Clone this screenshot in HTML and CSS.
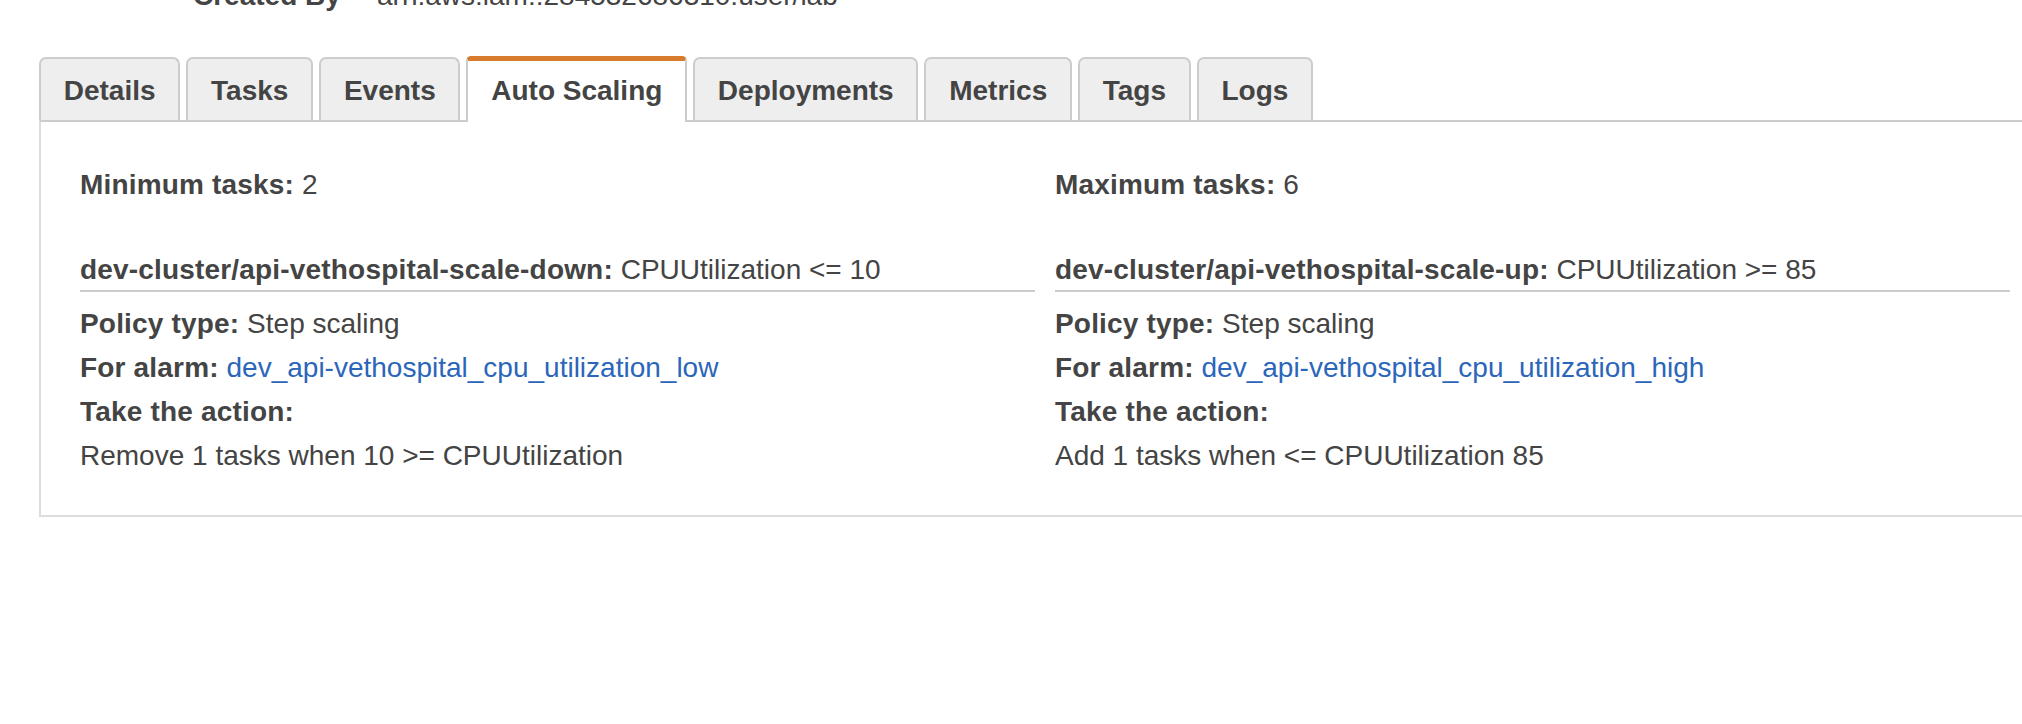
FILE: index.html
```html
<!DOCTYPE html>
<html>
<head>
<meta charset="utf-8">
<link rel="stylesheet" href="styles.css">
</head>
<body>
<div class="page">
  <div class="meta">
    <span class="meta-label">Created By</span>
    <span class="meta-value">arn:aws:iam::284532686310:user/lab</span>
  </div>
  <div class="tabs">
    <div class="tab">Details</div>
    <div class="tab">Tasks</div>
    <div class="tab">Events</div>
    <div class="tab active">Auto Scaling</div>
    <div class="tab">Deployments</div>
    <div class="tab">Metrics</div>
    <div class="tab">Tags</div>
    <div class="tab">Logs</div>
  </div>
  <div class="panel">
    <div class="col">
      <div class="limit"><b>Minimum tasks:</b> 2</div>
      <div class="policy-head"><b>dev-cluster/api-vethospital-scale-down:</b> CPUUtilization &lt;= 10</div>
      <div class="row"><b>Policy type:</b> Step scaling</div>
      <div class="row"><b>For alarm:</b> <a class="link" href="#">dev_api-vethospital_cpu_utilization_low</a></div>
      <div class="row"><b>Take the action:</b></div>
      <div class="row">Remove 1 tasks when 10 &gt;= CPUUtilization</div>
    </div>
    <div class="col">
      <div class="limit"><b>Maximum tasks:</b> 6</div>
      <div class="policy-head"><b>dev-cluster/api-vethospital-scale-up:</b> CPUUtilization &gt;= 85</div>
      <div class="row"><b>Policy type:</b> Step scaling</div>
      <div class="row"><b>For alarm:</b> <a class="link" href="#">dev_api-vethospital_cpu_utilization_high</a></div>
      <div class="row"><b>Take the action:</b></div>
      <div class="row">Add 1 tasks when &lt;= CPUUtilization 85</div>
    </div>
  </div>
</div>
</body>
</html>
```

FILE: styles.css
```css
html, body {
  margin: 0;
  padding: 0;
  background: #fff;
  overflow: hidden;
}
body {
  font-family: "Liberation Sans", Arial, sans-serif;
  font-size: 28px;
  color: #444;
}
b {
  letter-spacing: 0.18px;
}
.page {
  width: 2100px;
}
.meta {
  display: flex;
  height: 18px;
  line-height: 44px;
  margin-top: -26px;
  padding-left: 193px;
  margin-bottom: 64px;
}
.meta-label {
  font-weight: bold;
  width: 184px;
}
.tabs {
  display: flex;
  align-items: flex-end;
  gap: 6px;
  padding-left: 39px;
}
.tab {
  box-sizing: border-box;
  height: 63px;
  padding: 2px 22.75px 0;
  line-height: 59px;
  font-weight: bold;
  background: #eee;
  border: 2px solid #ccc;
  border-bottom: 0;
  border-radius: 7px 7px 0 0;
  white-space: nowrap;
}
.tab.active {
  position: relative;
  z-index: 1;
  height: 66px;
  margin-bottom: -2px;
  padding-top: 0;
  background: #fff;
  border-top: 5px solid #d97b2c;
  border-radius: 5px 5px 0 0;
}
.panel {
  margin-left: 39px;
  width: 1930px;
  padding: 41px 39px 37px;
  border: 2px solid #ddd;
  border-top-color: #ccc;
  display: grid;
  grid-template-columns: 955px 955px;
  column-gap: 20px;
}
.col {
  line-height: 44px;
}
.limit {
  margin-bottom: 43px;
}
.policy-head {
  line-height: 40px;
  border-bottom: 2px solid #ccc;
  margin-bottom: 10px;
  white-space: nowrap;
}
.row {
  white-space: nowrap;
}
.link {
  color: #2b66ba;
  text-decoration: none;
}
```
